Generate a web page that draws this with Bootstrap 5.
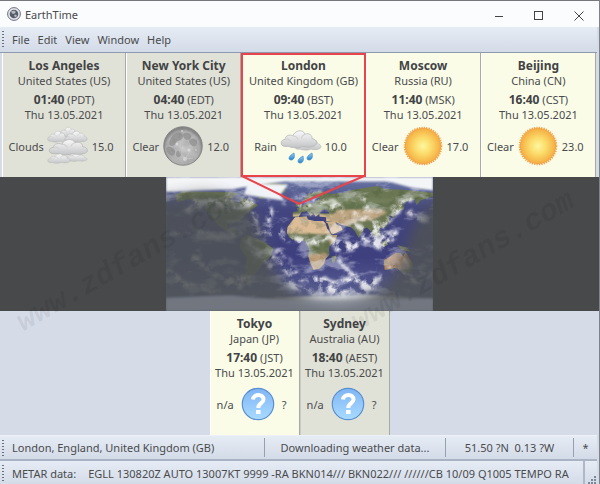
<!DOCTYPE html>
<html lang="en">
<head>
<meta charset="utf-8">
<meta name="viewport" content="width=device-width, initial-scale=1">
<title>EarthTime</title>
<link href="https://cdn.jsdelivr.net/npm/bootstrap@5.3.0/dist/css/bootstrap.min.css" rel="stylesheet">
<style>
body{font-family:"Noto Sans","Open Sans",sans-serif;font-size:11px;line-height:15px;color:#4a4b4d;background:#d5dce8;min-height:100vh}
.titlebar{background:#fbfcfe;border-top:1px solid #77787c;height:27px;padding-left:7px}
.winbtn{width:40px;height:26px;background:none;border:0;padding:0;color:#444}
.winbtn:hover{background:#e4e7ec}
.toolstrip{background:linear-gradient(#e6ecf4,#d3dbe8);margin-right:2px}
.menus{height:26px;border-bottom:1px solid #8f9ab0;padding-left:2px;gap:8px}
.menus button{background:none;border:0;padding:0;color:inherit}
.grip{width:2px;align-self:stretch;margin:4px 0 3px;background:repeating-linear-gradient(#6b7079 0 1px,transparent 1px 3px)}
.clocks{padding:0 3px 0 2px}
.clock{height:124px;padding-top:5px;background:#fafce8;border-left:1px solid #fff;border-right:1px solid #a9aaa5}
.clock.dark{background:#e1e2d7}
.clock.w1{flex:124 1 0}.clock.w2{flex:115 1 0}.clock.w3{flex:122 1 0}
.clock h2{font-size:12px;line-height:15px;font-weight:700;margin:0;color:#424345}
.clock .hour{margin-top:4px}
.clock b{font-size:12px;color:#424345}
.clock svg.wx{width:42px;height:42px;flex:none}
.clock .sky{margin-top:3px;gap:3px;padding-right:6px}
.clock.picked{border:2px solid #e9434b;padding-top:3px}
.pointer-tip{top:calc(100% + 1px);left:-2px;width:calc(100% + 4px);height:30px;z-index:3}
.world{background:#48494b;height:134px}
.world svg{width:267px;height:134px}
.lower .clock{width:90px}
.lower .clock.dark{border-left-color:#c9cac2}
.status{height:26px;padding-left:2px;border-bottom:2px solid #a9b3c4;border-top:1px solid #eef2f8}
.sep{width:1px;height:19px;background:#96a0b1}
.metar{height:24px;padding-left:2px}
.metar .text-box{margin-right:12px;border-right:2px solid #aeb8c9}
.sizer{right:0;bottom:0}
.overlay-mark{inset:0;z-index:5;pointer-events:none}
.window-edge{border-right:1px solid #7d828b}
.w-load{width:180px}.w-coord{width:127px}.w-star{width:23px}
</style>
<script src="https://cdn.jsdelivr.net/npm/bootstrap@5.3.0/dist/js/bootstrap.bundle.min.js"></script>
</head>
<body>
<svg width="0" height="0" class="position-absolute" aria-hidden="true">
<defs>
<radialGradient id="sunG"><stop offset="0" stop-color="#fdf6a0"/><stop offset=".45" stop-color="#fbdd6c"/><stop offset="1" stop-color="#f5ae42"/></radialGradient>
<radialGradient id="moonG" cx=".5" cy=".55"><stop offset="0" stop-color="#cacaca"/><stop offset=".85" stop-color="#b0b0b0"/><stop offset="1" stop-color="#888"/></radialGradient>
<linearGradient id="cloudG" x2="0" y2="1"><stop offset="0" stop-color="#fafafa"/><stop offset="1" stop-color="#c3c4c6"/></linearGradient>
<linearGradient id="dropG" x2="0" y2="1"><stop offset="0" stop-color="#9bcdf0"/><stop offset="1" stop-color="#2484cf"/></linearGradient>
<linearGradient id="helpG" x2="0" y2="1"><stop offset="0" stop-color="#7fb5f5"/><stop offset="1" stop-color="#a9dbff"/></linearGradient>
<symbol id="puff" viewBox="0 0 44 23" preserveAspectRatio="none"><path d="M5 20C0 19 0 12 6 12C6 7 12 6 15 8C17 1 27 0 29 6C34 4 38 8 37 11C44 12 44 19 38 20C33 22 28 20 26 20C20 23 12 21 10 20Z" fill="url(#cloudG)" stroke="#b0b1b3" stroke-width=".8"/><path d="M15 8c3 0 5 2 6 4M29 6c-3 1-4 3-4 5M6 12c3-1 5 0 6 2" fill="none" stroke="#cfd0d1" stroke-width="1.200"/></symbol>
<symbol id="clouds" viewBox="0 0 42 42"><use href="#puff" x="11" y="1" width="20" height="13"/><use href="#puff" x="0" y="5" width="21" height="13"/><use href="#puff" x="17" y="5" width="24" height="13"/><use href="#puff" x="17" y="28" width="24" height="9"/><use href="#puff" x="1" y="13" width="41" height="18"/><use href="#puff" x="0" y="28" width="24" height="11"/></symbol>
<symbol id="rain" viewBox="0 0 42 42"><use href="#puff" x="14" y="12" width="28" height="14"/><use href="#puff" x="0" y="4" width="38" height="20"/><g fill="url(#dropG)" stroke="#2b7fc0" stroke-width=".6"><path d="M14 28c1 4 0 7-3 7s-3-4 3-7z"/><path d="M23 31c1 4 0 7-3 7s-3-4 3-7z"/><path d="M32 28c1 4 0 7-3 7s-3-4 3-7z"/></g></symbol>
<symbol id="sun" viewBox="0 0 42 42"><circle cx="21" cy="21" r="18.300" fill="none" stroke="#f0a24d" stroke-width="2" stroke-dasharray="1.300 1.100"/><circle cx="21" cy="21" r="17.600" fill="url(#sunG)" stroke="#f3a545"/></symbol>
<symbol id="moon" viewBox="0 0 42 42"><circle cx="21" cy="21" r="19.300" fill="url(#moonG)" stroke="#7c7c7c" stroke-width=".8"/><g fill="#878787" opacity=".6"><path d="M9 13c3-6 8-7 11-4s-1 7-4 7-2 5-6 5-3-4-1-8z"/><path d="M23 8c4-1 6 1 6 4s-4 4-6 2-3-5 0-6zM29 14c4-1 7 2 6 5s-4 3-6 1-3-5 0-6z"/><path d="M5 22c4-1 7 1 8 4s-2 6-5 4-5-6-3-8zM15 26c3-1 5 1 4 4s-5 2-5 0 0-3 1-4z"/></g><g fill="#e0e0e0" opacity=".8"><circle cx="23" cy="34" r="2"/><circle cx="15" cy="19" r="1.300"/><circle cx="27" cy="25" r="1.500"/><circle cx="34" cy="25" r="1"/><circle cx="20" cy="6" r="1"/><path d="M23 34l5-8M23 34l-6-8M23 34l8-1" stroke="#dcdcdc" stroke-width=".6"/></g><circle cx="21" cy="21" r="19" filter="url(#rock)" opacity=".13"/></symbol>
<filter id="rock" x="0" y="0" width="1" height="1"><feTurbulence type="fractalNoise" baseFrequency=".18" numOctaves="3" seed="4"/><feColorMatrix values="0 0 0 0 .15  0 0 0 0 .15  0 0 0 0 .15  3 0 0 0 -1.2"/><feComposite in2="SourceAlpha" operator="in"/></filter>
<symbol id="unknown" viewBox="0 0 42 42"><circle cx="21" cy="21" r="15.700" fill="url(#helpG)" stroke="#5a8fd0" stroke-width="1.200"/><path d="M16 16.500C16.500 10.500 26.500 10.500 26.500 16.500C26.500 20.500 21.300 20 21.300 25" fill="none" stroke="#fff" stroke-width="4"/><rect x="19" y="27" width="4.600" height="4" fill="#fff"/></symbol>
</defs>
</svg>

<div class="window-edge position-relative d-flex flex-column min-vh-100 overflow-hidden">
<header class="titlebar d-flex align-items-center">
  <svg width="14" height="14" viewBox="0 0 14 14" aria-hidden="true"><circle cx="7" cy="7" r="6.400" fill="#e4e6ec" stroke="#5c6070" stroke-width=".9"/><circle cx="7" cy="7" r="4.300" fill="#565b68"/><path d="M4 4.500l3-1 2 1.500-2 2-2-.5zM7 8l2-.5 1 1.500-2 1.500z" fill="#b5b8bd"/></svg>
  <span class="ms-1 me-auto">EarthTime</span>
  <button class="winbtn" aria-label="Minimize"><svg width="10" height="10"><path d="M1 5.500h8" stroke="currentColor"/></svg></button>
  <button class="winbtn" aria-label="Maximize"><svg width="10" height="10"><rect x=".5" y=".5" width="8" height="8" fill="none" stroke="currentColor"/></svg></button>
  <button class="winbtn" aria-label="Close"><svg width="10" height="10"><path d="M.5.5l9 9M9.500.5l-9 9" stroke="currentColor"/></svg></button>
</header>

<nav class="toolstrip menus d-flex align-items-center">
  <span class="grip"></span>
  <button>File</button><button>Edit</button><button>View</button><button>Window</button><button>Help</button>
</nav>

<main class="flex-grow-1">
<section class="clocks d-flex text-center">
  <article class="clock dark w1"><h2>Los Angeles</h2><div>United States (US)</div><div class="hour"><b>01:40</b> (PDT)</div><div>Thu 13.05.2021</div><div class="sky d-flex align-items-center justify-content-center"><span>Clouds</span><svg class="wx"><use href="#clouds"/></svg><span>15.0</span></div></article>
  <article class="clock dark w2"><h2>New York City</h2><div>United States (US)</div><div class="hour"><b>04:40</b> (EDT)</div><div>Thu 13.05.2021</div><div class="sky d-flex align-items-center justify-content-center"><span>Clear</span><svg class="wx"><use href="#moon"/></svg><span>12.0</span></div></article>
  <article class="clock picked w3 position-relative"><h2>London</h2><div>United Kingdom (GB)</div><div class="hour"><b>09:40</b> (BST)</div><div>Thu 13.05.2021</div><div class="sky d-flex align-items-center justify-content-center"><span>Rain</span><svg class="wx"><use href="#rain"/></svg><span>10.0</span></div>
    <svg class="pointer-tip position-absolute" viewBox="0 0 122 30" preserveAspectRatio="none" aria-hidden="true"><path d="M1 0L57 28L121 0" fill="none" stroke="#e9434b" stroke-width="2"/></svg></article>
  <article class="clock w2"><h2>Moscow</h2><div>Russia (RU)</div><div class="hour"><b>11:40</b> (MSK)</div><div>Thu 13.05.2021</div><div class="sky d-flex align-items-center justify-content-center"><span>Clear</span><svg class="wx"><use href="#sun"/></svg><span>17.0</span></div></article>
  <article class="clock w2"><h2>Beijing</h2><div>China (CN)</div><div class="hour"><b>16:40</b> (CST)</div><div>Thu 13.05.2021</div><div class="sky d-flex align-items-center justify-content-center"><span>Clear</span><svg class="wx"><use href="#sun"/></svg><span>23.0</span></div></article>
</section>

<section class="world d-flex justify-content-center">
<svg viewBox="-180 -90 360 180" preserveAspectRatio="none" role="img" aria-label="World map with day and night">
<defs>
<filter id="b1" x="-20%" y="-20%" width="140%" height="140%"><feGaussianBlur stdDeviation="1.500"/></filter>
<filter id="b2" x="-20%" y="-20%" width="140%" height="140%"><feGaussianBlur stdDeviation="9"/></filter>
<filter id="wisps" x="0" y="0" width="1" height="1"><feTurbulence type="fractalNoise" baseFrequency=".028 .055" numOctaves="5" seed="11"/><feColorMatrix values="0 0 0 0 .9  0 0 0 0 .92  0 0 0 0 1  6 0 0 0 -3.200"/></filter>
<filter id="soil" x="0" y="0" width="1" height="1"><feTurbulence type="fractalNoise" baseFrequency=".09" numOctaves="4" seed="7"/><feColorMatrix values="0 0 0 0 .04  0 0 0 0 .08  0 0 0 0 .03  4 0 0 0 -1.900"/></filter>
<filter id="vapor" filterUnits="userSpaceOnUse" x="-180" y="-90" width="360" height="180">
 <feTurbulence type="fractalNoise" baseFrequency=".07" numOctaves="4" seed="2" result="n"/>
 <feDisplacementMap in="SourceGraphic" in2="n" scale="14" xChannelSelector="R" yChannelSelector="G" result="d"/>
 <feGaussianBlur in="d" stdDeviation="2" result="s"/>
 <feTurbulence type="fractalNoise" baseFrequency=".08" numOctaves="5" seed="9"/>
 <feColorMatrix values="0 0 0 0 1  0 0 0 0 1  0 0 0 0 1  4 0 0 0 -1.500" result="m"/>
 <feComposite in="s" in2="m" operator="in"/></filter>
<linearGradient id="sea" x2="0" y2="1"><stop offset="0" stop-color="#6a76a4"/><stop offset=".25" stop-color="#42457f"/><stop offset=".6" stop-color="#3e3f7e"/><stop offset="1" stop-color="#656d9c"/></linearGradient>
<clipPath id="landClip"><path id="land" d="M-17-15L-16-23L-10-31L-6-36L10-37L11-33L20-31L32-31L35-28L37-21L43-12L51-12L48-5L40 4L40 15L35 20L33 27L27 33L19 35L15 27L12 17L13 7L9-1L8-4L-8-5L-14-9ZM35-30L38-28L43-14L45-13L58-19L56-24L50-26L48-30ZM-9-37L-9-43L-1-44L-4-48L3-51L9-54L12-55L20-54L24-59L29-60L21-64L25-66L18-63L12-57L5-60L14-68L28-71L42-67L60-69L72-73L105-78L115-74L140-73L180-69L180-64L163-58L158-52L155-60L140-55L141-47L132-43L127-35L122-40L121-31L116-23L108-21L109-12L104-9L100-14L103-2L97-16L91-22L87-20L80-8L74-18L70-22L57-26L48-30L36-31L36-36L27-37L27-41L40-41L38-46L30-46L28-42L22-37L19-41L13-45L18-40L15-38L10-44L3-43L-1-37ZM-5-50L1-51L-2-57L-5-58ZM44 25L43 17L50 15L47 25ZM114 22L122 17L130 12L136 12L140 17L143 11L153 27L150 38L140 38L130 32L115 35ZM95-5L105 6L100 0ZM109 0L117-6L119 1L114 4ZM131 1L145 5L150 10L138 8ZM-168-66L-156-71L-125-70L-95-70L-82-68L-94-60L-82-54L-78-62L-65-58L-56-52L-66-45L-75-38L-81-30L-84-30L-97-27L-97-20L-88-21L-84-10L-78-8L-95-15L-106-22L-115-31L-124-42L-130-53L-150-60L-165-56ZM-78-8L-70-12L-52-5L-35 6L-39 17L-48 25L-58 38L-66 45L-69 54L-75 48L-71 18L-81 5ZM-55-60L-20-70L-18-80L-40-83L-68-77L-53-70Z"/></clipPath>
<clipPath id="worldClip"><rect x="-180" y="-90" width="360" height="180"/></clipPath>
</defs>
<g clip-path="url(#worldClip)">
<rect x="-180" y="-90" width="360" height="180" fill="url(#sea)"/>
<use href="#land" fill="#6b7653"/>
<g clip-path="url(#landClip)">
 <path d="M-20-40H60V-10L40-13L-20-14Z" fill="#dcbd97" filter="url(#b1)"/>
 <path d="M10 14L38 12L36 30L18 38Z" fill="#bd9f7b" filter="url(#b1)"/>
 <path d="M40-8L52-14L50-4L42 2Z" fill="#c4a07c" filter="url(#b1)"/>
 <path d="M40-32L50-46L85-47L110-47L118-42L100-33L78-30L65-24Z" fill="#bda480" filter="url(#b1)"/>
 <path d="M-10-45L15-48L20-58L60-62L100-62L130-60L100-50L50-48Z" fill="#727f5a" filter="url(#b1)"/>
 <path d="M112 10H152V30L140 36H112Z" fill="#b5825c" filter="url(#b1)"/>
 <rect x="-180" y="-90" width="360" height="180" filter="url(#soil)" opacity=".25"/>
</g>
<path d="M-75-66L-20-58L-26-66L-15-80L-70-82Z" fill="#f0f3f7" filter="url(#b1)"/>
<path d="M-180 90V74L-100 70L-60 74L20 70L90 68L180 74V90Z" fill="#e3e7ef" filter="url(#b1)"/>
<path d="M-180-90H180V-72L150-76L120-84L60-84L-20-84L-50-80L-90-74L-180-70Z" fill="#f4f5f7" filter="url(#b1)"/>
<rect x="-180" y="-90" width="360" height="180" filter="url(#wisps)" opacity=".38"/>
<g fill="none" stroke="#fff" stroke-linecap="round" filter="url(#vapor)" opacity=".85">
 <path d="M-38 15C-24 20-22 36-10 42S5 50 12 48" stroke-width="6"/>
 <path d="M-30 10C-14 18-14 32-4 38" stroke-width="3"/>
 <path d="M18 50C30 50 38 62 56 58" stroke-width="14"/>
 <path d="M44 16C60 28 68 38 80 48S102 55 110 46" stroke-width="6"/>
 <path d="M60 56C76 42 84 58 100 52" stroke-width="16"/>
 <path d="M-20 50C0 64 40 70 90 66" stroke-width="7" opacity=".8"/>
 <path d="M-15-8C0-6 12-2 27-4S36-10 43-6" stroke-width="9"/>
 <path d="M51 1C60 6 67 6 77 2" stroke-width="11"/>
 <path d="M88-6C96-16 108-24 117-10C122-4 110 0 99-3" stroke-width="12"/>
 <path d="M64-34C74-22 82-17 92-24S106-22 112-17" stroke-width="8"/>
 <path d="M80-59C92-68 102-52 86-46C72-40 70-34 96-36" stroke-width="5"/>
 <path d="M42-46C52-54 62-48 52-42" stroke-width="6"/>
 <path d="M-42-50C-35-42-46-30-38-23" stroke-width="6"/>
 <path d="M-60-15C-40-20-30-20-20-14" stroke-width="8"/>
 <path d="M-66-42C-50-30-60-24-70-22" stroke-width="6"/>
 <path d="M0-48C18-56 30-60 48-58" stroke-width="5"/>
 <path d="M-20-56C-5-66 10-70 30-70" stroke-width="6" opacity=".7"/>
 <path d="M112-26C126-40 130-55 150-62" stroke-width="7"/>
 <path d="M108 4L128-14M120 30C135 34 145 44 155 50" stroke-width="8"/>
 <path d="M-150-48C-120-66-100-40-70-58" stroke-width="12"/>
 <path d="M-175-12C-150-24-120-4-80-14" stroke-width="8" opacity=".7"/>
 <path d="M-145 18C-120 36-105 55-75 53S-90 40-100 48M-178 38C-155 62-130 54-112 64M-70-5C-60 15-45 20-38 30M140 20C155 30 165 42 178 40M150-40C160-30 170-30 178-36" stroke-width="8" opacity=".9"/>
</g>
<path d="M-200 110V-58L-130-68L-100-64L-72-54L-58-36L-50-12L-46 4L-40 18L-28 42L-10 62L20 74L50 78L80 74L108 62L126 40L139 15L144 0L150-15L160-36L174-54L200-62V110Z" fill="#505255" opacity=".86" filter="url(#b2)"/>
<path d="M-180 90V72L-90 69L-40 74L30 77L180 73V90Z" fill="#7f8595" opacity=".5" filter="url(#b1)"/>
</g>
</svg>
</section>

<section class="lower d-flex justify-content-center text-center">
  <article class="clock"><h2>Tokyo</h2><div>Japan (JP)</div><div class="hour"><b>17:40</b> (JST)</div><div>Thu 13.05.2021</div><div class="sky d-flex align-items-center justify-content-center"><span>n/a</span><svg class="wx"><use href="#unknown"/></svg><span>?</span></div></article>
  <article class="clock dark"><h2>Sydney</h2><div>Australia (AU)</div><div class="hour"><b>18:40</b> (AEST)</div><div>Thu 13.05.2021</div><div class="sky d-flex align-items-center justify-content-center"><span>n/a</span><svg class="wx"><use href="#unknown"/></svg><span>?</span></div></article>
</section>
</main>

<footer>
  <div class="toolstrip status d-flex align-items-center text-nowrap">
    <span class="grip"></span><span class="me-auto ps-2">London, England, United Kingdom (GB)</span>
    <span class="sep"></span><span class="w-load text-center">Downloading weather data...</span>
    <span class="sep"></span><span class="w-coord text-center">51.50 ?N &nbsp;0.13 ?W</span>
    <span class="sep"></span><span class="w-star text-center">*</span>
  </div>
  <div class="toolstrip metar d-flex align-items-center text-nowrap position-relative">
    <span class="grip"></span>
    <div class="text-box flex-grow-1 d-flex align-items-center align-self-stretch ps-2"><span class="me-2 pe-1">METAR data:</span><span>EGLL 130820Z AUTO 13007KT 9999 -RA BKN014/// BKN022/// //////CB 10/09 Q1005 TEMPO RA</span></div>
    <svg class="sizer position-absolute" width="10" height="10" aria-hidden="true"><path d="M7 1h2v2h-2zM4 4h2v2h-2zM7 4h2v2h-2zM1 7h2v2h-2zM4 7h2v2h-2zM7 7h2v2h-2z" fill="#7d8798"/></svg>
  </div>
</footer>

<svg class="overlay-mark position-absolute w-100 h-100" viewBox="0 0 600 484" preserveAspectRatio="xMidYMid slice" font-family="Liberation Mono, monospace" font-size="30" font-weight="700" font-style="italic" fill="#000" fill-opacity=".025" aria-hidden="true">
<text transform="translate(24 156) rotate(-30)">www.zdfans.com</text><text transform="translate(358 156) rotate(-30)">www.zdfans.com</text>
<text transform="translate(24 331) rotate(-30)" fill-opacity=".08">www.zdfans.com</text><text transform="translate(358 331) rotate(-30)" fill-opacity=".08">www.zdfans.com</text>
<text transform="translate(85 471) rotate(-30)">zdfans.com</text><text transform="translate(419 471) rotate(-30)">zdfans.com</text>
</svg>
</div>
</body>
</html>
